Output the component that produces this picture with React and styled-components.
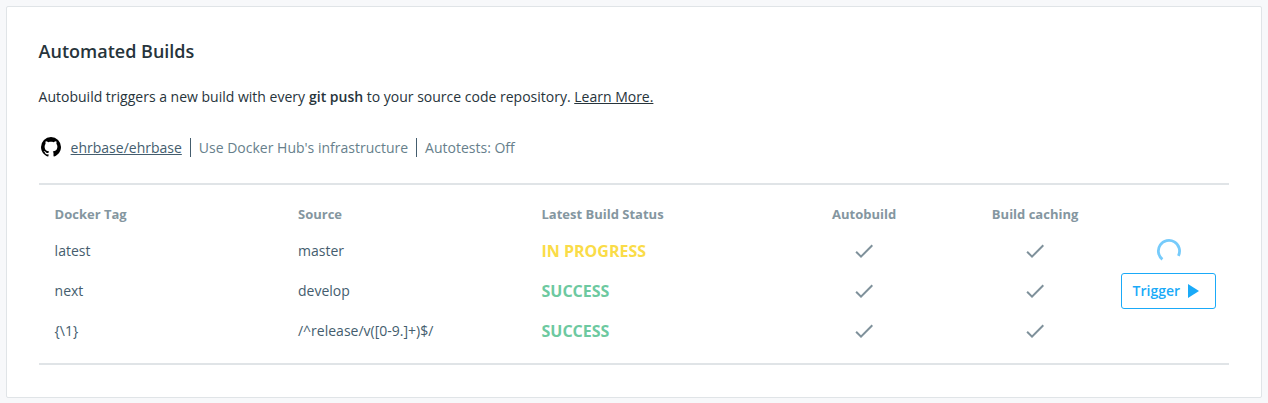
import React from "react";
import styled, { createGlobalStyle } from "styled-components";

const GlobalStyle = createGlobalStyle`
  *, *::before, *::after { box-sizing: border-box; }
  body {
    margin: 0;
    background: #f7f8fa;
    font-family: "Open Sans", sans-serif;
    font-size: 14px;
    line-height: 20px;
    color: #27343b;
  }
`;

const Page = styled.main`
  height: 403px;
  padding: 6px 6px 5px;
`;

const Card = styled.section`
  height: 392px;
  padding: 32px 32px 32px 31.6px;
  background: #fff;
  border: 1px solid #e0e4e7;
  border-radius: 2px;
`;

const Title = styled.h2`
  margin: 0;
  font-size: 18px;
  font-weight: 600;
  line-height: 24px;
`;

const Description = styled.p`
  margin: 24px 0 0;
`;

const Strong = styled.strong`
  margin-left: 0.3px;
  font-weight: 600;
`;

const Link = styled.a`
  color: inherit;
  text-decoration: underline;
`;

const RepoBar = styled.div`
  display: flex;
  align-items: center;
  height: 24px;
  margin-top: 28px;
  color: #677f8c;
`;

const RepoItem = styled.span`
  padding: 0 8px;
  line-height: 19px;
  color: ${({ $dark }) => ($dark ? "#445d6e" : "inherit")};

  & + & {
    border-left: 1px solid #445d6e;
  }
`;

const BuildTable = styled.div`
  height: 182px;
  margin-top: 24px;
  padding: 14px 13px 0 16px;
  border-top: 2px solid #e0e4e7;
  border-bottom: 2px solid #e0e4e7;
`;

const Row = styled.div`
  display: grid;
  grid-template-columns: 243.4px 243.5px 237.3px 170.8px 171px 95px;
  align-items: center;
  height: 40px;
  color: #445d6e;
`;

const HeaderRow = styled(Row)`
  height: 32px;
  padding-bottom: 2px;
  font-size: 13px;
  font-weight: 700;
  color: #8496a0;
`;

const Cell = styled.div`
  display: flex;
  align-items: center;
  justify-content: ${({ $center }) => ($center ? "center" : "flex-start")};
`;

const Status = styled(Cell)`
  font-size: 16px;
  font-weight: 700;
  color: ${({ $state }) => ($state === "SUCCESS" ? "#6dc9a0" : "#fadc48")};
`;

const TriggerButton = styled.button`
  display: flex;
  align-items: center;
  flex: none;
  width: 95px;
  height: 36px;
  padding: 0 0 0 11px;
  border: 1px solid #1aaaf8;
  border-radius: 3px;
  background: #fff;
  color: #1aaaf8;
  font: 600 14px/20px "Open Sans", sans-serif;
`;

const Icon = styled.svg`
  display: block;
  flex: none;
  width: 24px;
  height: 24px;
  fill: ${({ $color }) => $color || "currentColor"};
`;

const SpinnerIcon = styled.svg`
  display: block;
  width: 26px;
  height: 26px;
  margin-left: 1.4px;
  fill: none;
  stroke: #76cbfb;
  stroke-width: 2.8;
`;

const GitHubIcon = () => (
  <Icon viewBox="0 0 24 24" $color="#000">
    <path d="M12,2A10,10 0 0,0 2,12C2,16.42 4.87,20.17 8.84,21.5C9.34,21.58 9.5,21.27 9.5,21C9.5,20.77 9.5,20.14 9.5,19.31C6.73,19.91 6.14,17.97 6.14,17.97C5.68,16.81 5.03,16.5 5.03,16.5C4.12,15.88 5.1,15.9 5.1,15.9C6.1,15.97 6.63,16.93 6.63,16.93C7.5,18.45 8.97,18 9.54,17.76C9.63,17.11 9.89,16.67 10.17,16.42C7.95,16.17 5.62,15.31 5.62,11.5C5.62,10.39 6,9.5 6.65,8.79C6.55,8.54 6.2,7.5 6.75,6.15C6.75,6.15 7.59,5.88 9.5,7.17C10.29,6.95 11.15,6.84 12,6.84C12.85,6.84 13.71,6.95 14.5,7.17C16.41,5.88 17.25,6.15 17.25,6.15C17.8,7.5 17.45,8.54 17.35,8.79C18,9.5 18.38,10.39 18.38,11.5C18.38,15.32 16.04,16.16 13.81,16.41C14.17,16.72 14.5,17.33 14.5,18.26C14.5,19.6 14.5,20.68 14.5,21C14.5,21.27 14.66,21.59 15.17,21.5C19.14,20.16 22,16.42 22,12A10,10 0 0,0 12,2Z" />
  </Icon>
);

const CheckIcon = () => (
  <Icon viewBox="0 0 24 24" $color="#7f919b">
    <path d="M9 16.17L4.83 12l-1.42 1.41L9 19 21 7l-1.41-1.41z" />
  </Icon>
);

const PlayIcon = () => (
  <Icon viewBox="0 0 24 24">
    <path d="M8 5v14l11-7z" />
  </Icon>
);

const Spinner = () => (
  <SpinnerIcon viewBox="0 0 26 26">
    <path d="M6.4 21.3A10.6 10.6 0 1 1 22.4 17.8" />
  </SpinnerIcon>
);

const builds = [
  { tag: "latest", source: "master", status: "IN PROGRESS", action: "spinner" },
  { tag: "next", source: "develop", status: "SUCCESS", action: "trigger" },
  { tag: "{\\1}", source: "/^release/v([0-9.]+)$/", status: "SUCCESS" },
];

export default function App() {
  return (
    <Page>
      <GlobalStyle />
      <Card>
        <Title>Automated Builds</Title>
        <Description>
          Autobuild triggers a new build with every <Strong>git push</Strong> to your source code
          repository. <Link>Learn More.</Link>
        </Description>
        <RepoBar>
          <GitHubIcon />
          <RepoItem $dark>
            <Link>ehrbase/ehrbase</Link>
          </RepoItem>
          <RepoItem>Use Docker Hub's infrastructure</RepoItem>
          <RepoItem>Autotests: Off</RepoItem>
        </RepoBar>
        <BuildTable>
          <HeaderRow>
            <Cell>Docker Tag</Cell>
            <Cell>Source</Cell>
            <Cell>Latest Build Status</Cell>
            <Cell $center>Autobuild</Cell>
            <Cell $center>Build caching</Cell>
            <Cell />
          </HeaderRow>
          {builds.map((build) => (
            <Row key={build.tag}>
              <Cell>{build.tag}</Cell>
              <Cell>{build.source}</Cell>
              <Status $state={build.status}>{build.status}</Status>
              <Cell $center>
                <CheckIcon />
              </Cell>
              <Cell $center>
                <CheckIcon />
              </Cell>
              <Cell $center>
                {build.action === "spinner" && <Spinner />}
                {build.action === "trigger" && (
                  <TriggerButton>
                    Trigger
                    <PlayIcon />
                  </TriggerButton>
                )}
              </Cell>
            </Row>
          ))}
        </BuildTable>
      </Card>
    </Page>
  );
}
